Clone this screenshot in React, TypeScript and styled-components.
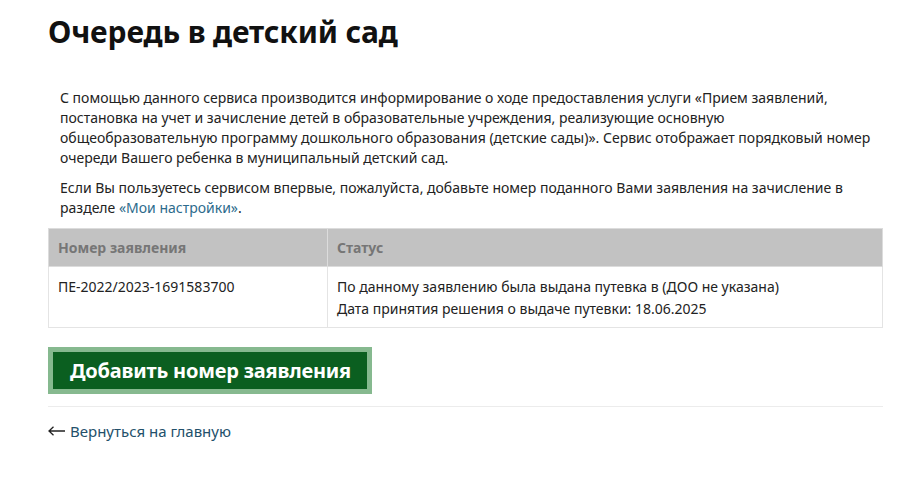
import React from 'react';
import styled, { createGlobalStyle } from 'styled-components';

const GlobalStyle = createGlobalStyle`
    html, body {
        margin: 0;
        padding: 0;
        background: #ffffff;
    }
    body {
        font-family: 'Noto Sans', 'Open Sans', sans-serif;
        color: #222222;
    }
`;

const Page = styled.div`
    width: 835px;
    padding: 14px 0 0 48px;
`;

const Title = styled.h1`
    margin: 0 0 38px;
    font-size: 30px;
    line-height: 36px;
    font-weight: 700;
    color: #111111;
    letter-spacing: -0.15px;
`;

const Paragraph = styled.p`
    margin: 0 0 10px;
    padding: 0 12px;
    font-size: 14px;
    line-height: 20px;
`;

const Link = styled.a`
    color: #2d6b8c;
    text-decoration: none;
`;

const Table = styled.table`
    width: 100%;
    margin-top: 8px;
    border-collapse: collapse;
    font-size: 14px;
    line-height: 20px;
`;

const HeadCell = styled.th<{ $width?: string }>`
    width: ${ p => p.$width ?? 'auto' };
    height: 37px;
    padding: 0 9px;
    background: #c2c2c2;
    border: 1px solid #dcdcdc;
    color: #767676;
    font-weight: 700;
    text-align: left;
`;

const Cell = styled.td`
    padding: 10px 9px 8px;
    border: 1px solid #e4e4e4;
    vertical-align: top;
`;

const CellLine = styled.div`
    & + & {
        margin-top: 2px;
    }
`;

const Button = styled.button`
    margin-top: 19px;
    height: 47px;
    padding: 0 16px 0 17px;
    background: #0b5f20;
    border: 5px solid #86b98f;
    color: #ffffff;
    font-family: inherit;
    font-size: 20px;
    font-weight: 700;
    line-height: 37px;
    letter-spacing: -0.2px;
    cursor: pointer;
`;

const Divider = styled.hr`
    margin: 12px 0 0;
    border: 0;
    border-top: 1px solid #ececec;
`;

const BackLink = styled.a`
    display: inline-flex;
    align-items: center;
    gap: 5px;
    margin-top: 13px;
    font-size: 15px;
    line-height: 22px;
    color: #23506a;
    text-decoration: none;
`;

const ArrowIcon = () => (
    <svg width="17" height="10" viewBox="0 0 17 10" fill="none" stroke="#222" strokeWidth="1.3">
        <path d="M1 5H17M5.5 0.8L1 5l4.5 4.2" />
    </svg>
);

export default function App(): JSX.Element {
    return (
        <>
            <GlobalStyle />
            <Page>
                <Title>Очередь в детский сад</Title>
                <Paragraph>
                    С помощью данного сервиса производится информирование о ходе предоставления услуги «Прием заявлений,
                    постановка на учет и зачисление детей в образовательные учреждения, реализующие основную
                    общеобразовательную программу дошкольного образования (детские сады)». Сервис отображает порядковый номер
                    очереди Вашего ребенка в муниципальный детский сад.
                </Paragraph>
                <Paragraph>
                    Если Вы пользуетесь сервисом впервые, пожалуйста, добавьте номер поданного Вами заявления на зачисление в
                    разделе <Link href="#">«Мои настройки»</Link>.
                </Paragraph>
                <Table>
                    <thead>
                        <tr>
                            <HeadCell $width="260px">Номер заявления</HeadCell>
                            <HeadCell>Статус</HeadCell>
                        </tr>
                    </thead>
                    <tbody>
                        <tr>
                            <Cell>ПЕ-2022/2023-1691583700</Cell>
                            <Cell>
                                <CellLine>По данному заявлению была выдана путевка в (ДОО не указана)</CellLine>
                                <CellLine>Дата принятия решения о выдаче путевки: 18.06.2025</CellLine>
                            </Cell>
                        </tr>
                    </tbody>
                </Table>
                <Button>Добавить номер заявления</Button>
                <Divider />
                <BackLink href="#"><ArrowIcon />Вернуться на главную</BackLink>
            </Page>
        </>
    );
}
